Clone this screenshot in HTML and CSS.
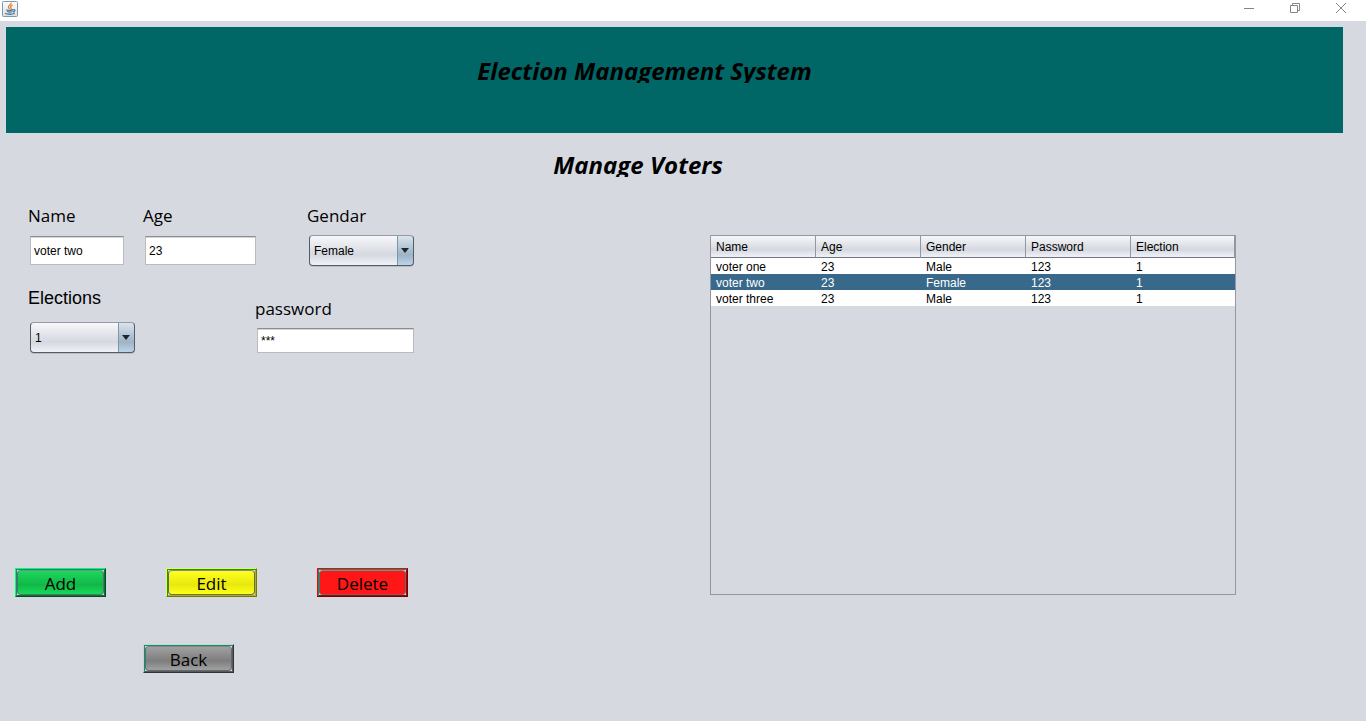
FILE: index.html
```html
<!DOCTYPE html>
<html lang="en">
<head>
<meta charset="utf-8">
<title>Election Management System</title>
<link rel="stylesheet" href="styles.css">
</head>
<body>
<div class="titlebar">
  <svg class="java-icon" viewBox="0 0 16 16" aria-hidden="true">
    <defs><linearGradient id="tile" x1="0" y1="0" x2="0" y2="1"><stop offset="0" stop-color="#fdfdfd"/><stop offset="1" stop-color="#dcdfe2"/></linearGradient></defs>
    <rect x=".5" y=".5" width="15" height="15" rx="1" fill="url(#tile)" stroke="#7f98ab"/>
    <path d="M9.200 1.800c.6 1.800-3.400 2.600-2.700 4.400.2.700.9 1.100 1 1.800M10.600 4.200c-2.200.8-2.500 1.700-1.600 2.700.4.500.1 1-.5 1.300" fill="none" stroke="#e8822c" stroke-width="1.300"/>
    <path d="M4.200 8.700c1.500.8 5 .8 6.800 0M5 10.500c1.400.7 4 .7 5.500 0M3 12.200c2.200 1.500 7.500 1.300 9.800 0M11.200 8.700c2.400-.6 2.200 1.700-.2 2.300" fill="none" stroke="#4d7a9c" stroke-width="1.300"/>
  </svg>
  <div class="window-controls">
    <button type="button" class="window-button" aria-label="Minimize"><svg viewBox="0 0 12 12"><path d="M1 6.500h10"/></svg></button>
    <button type="button" class="window-button" aria-label="Restore"><svg viewBox="0 0 12 12"><path d="M1.500 3.500h7v7h-7zM3.500 3.500v-2h7v7h-2"/></svg></button>
    <button type="button" class="window-button" aria-label="Close"><svg viewBox="0 0 12 12"><path d="M1 1l10 10M11 1L1 11"/></svg></button>
  </div>
</div>
<header class="banner"><h1 class="heading">Election Management System</h1></header>
<main>
  <h2 class="heading subheading">Manage Voters</h2>
  <div class="content">
    <form class="voter-form">
      <div class="row row-first">
        <div class="field"><label for="name">Name</label><div class="control"><input class="text name" id="name" type="text" value="voter two"></div></div>
        <div class="field"><label for="age">Age</label><div class="control"><input class="text age" id="age" type="text" value="23"></div></div>
        <div class="field"><label for="gender">Gendar</label><div class="control combo"><select id="gender"><option>Male</option><option selected>Female</option></select></div></div>
      </div>
      <div class="row row-second">
        <div class="field field-elections"><label class="plain" for="election">Elections</label><div class="control combo"><select id="election"><option>1</option></select></div></div>
        <div class="field"><label for="password">password</label><input class="text password" id="password" type="text" value="***" autocomplete="off"></div>
      </div>
      <div class="actions">
        <button type="button" class="action add"><span>Add</span></button>
        <button type="button" class="action edit"><span>Edit</span></button>
        <button type="button" class="action delete"><span>Delete</span></button>
      </div>
      <button type="button" class="action back"><span>Back</span></button>
    </form>
    <div class="table-pane">
      <table class="voters">
        <thead><tr><th>Name</th><th>Age</th><th>Gender</th><th>Password</th><th>Election</th></tr></thead>
        <tbody>
          <tr><td>voter one</td><td>23</td><td>Male</td><td>123</td><td>1</td></tr>
          <tr class="selected"><td>voter two</td><td>23</td><td>Female</td><td>123</td><td>1</td></tr>
          <tr><td>voter three</td><td>23</td><td>Male</td><td>123</td><td>1</td></tr>
        </tbody>
      </table>
    </div>
  </div>
</main>
</body>
</html>
```
FILE: styles.css
```css
* { box-sizing: border-box; }
body {
  margin: 0;
  min-height: 100vh;
  background: #d6d9e0;
  color: #000;
  font: 12px "Liberation Sans", Arial, sans-serif;
}
.titlebar {
  display: flex;
  justify-content: space-between;
  height: 21px;
  padding-left: 2px;
  background: #fff;
}
.java-icon { width: 16px; height: 16px; margin-top: 1px; }
.window-controls { display: flex; margin-right: 2px; }
.window-button {
  width: 46px;
  height: 16px;
  padding: 0;
  border: 0;
  background: none;
}
.window-button svg {
  display: block;
  width: 12px;
  height: 12px;
  margin: 0 auto;
  fill: none;
  stroke: #858585;
}
.banner {
  height: 106px;
  margin: 6px 23px 0 6px;
  padding: 30px 60px 0 0;
  background: #006666;
}
.heading {
  height: 26px;
  margin: 0;
  overflow: hidden;
  font: italic bold 24px/28px "Open Sans", "Noto Sans", sans-serif;
  text-align: center;
}
.subheading { margin-top: 18px; padding-right: 90px; }
.content {
  display: grid;
  grid-template-columns: 1fr 526px;
  padding: 27px 130px 48px 15px;
}
.row { display: flex; margin-left: 13px; }
.row-first { display: grid; grid-template-columns: 115px 164px auto; }
.row-second { align-items: flex-end; margin-top: 20px; }
.field { display: flex; flex-direction: column; gap: 7px; }
.field-elections { width: 227px; gap: 12px; }
label { font: 17px/24px "Open Sans", "Noto Sans", sans-serif; }
label.plain { font: 18px/24px "Liberation Sans", Arial, sans-serif; }
.control { display: flex; align-items: center; height: 31px; margin-left: 2px; }
.text {
  height: 29px;
  padding: 0 3px;
  border: 1px solid #b9bbc0;
  border-top: 1px solid #8a8c90;
  border-radius: 0;
  background: #fff;
  box-shadow: inset 0 1px 0 #d5d6d8;
  color: #000;
  font: inherit;
}
.name { width: 94px; }
.age { width: 111px; }
.password { width: 157px; height: 25px; margin-left: 2px; }
.combo { position: relative; width: 105px; }
.combo::after {
  content: "";
  position: absolute;
  right: 5px;
  top: 13px;
  border: 4px solid transparent;
  border-top: 5px solid #202428;
  border-bottom: 0;
  pointer-events: none;
}
select {
  appearance: none;
  width: 100%;
  height: 31px;
  padding: 0 20px 0 4px;
  border: 1px solid #525c69;
  border-top-color: #959ba5;
  border-radius: 4px;
  background:
    linear-gradient(#7d95a8, #7d95a8) right 15px top / 1px 100% no-repeat,
    linear-gradient(#dae4ec, #a9bfd0 50%, #9db4c7 65%, #bcd3e8) right / 16px 100% no-repeat,
    linear-gradient(#f7f8fa, #dcdfe5 50%, #d5d8df 65%, #eff2f8);
  box-shadow: 0 1px 0 #b9bdc6;
  color: #000;
  font: inherit;
}
.actions { display: flex; gap: 60px; margin-top: 215px; }
.action {
  width: 91px;
  height: 29px;
  padding: 1px 1px 1px 1px;
  border: 1px solid;
  background: #d6d9e0;
  color: #000;
  font: 17px/25px "Open Sans", "Noto Sans", sans-serif;
}
.action span {
  display: block;
  height: 25px;
  border: 1px solid #5f6b70;
  border-top-color: #7d8a88;
  border-radius: 4px;
}
.add { border-color: #00ff70 #00501f #00501f #00ff70; box-shadow: inset 1px 1px 0 #10906a, inset -1px -1px 0 #007a35; }
.add span { background: linear-gradient(#1cd85c, #11b848 60%, #16da58); }
.edit { border-color: #ffff00 #777700 #777700 #ffff00; box-shadow: inset 1px 1px 0 #10906a, inset -1px -1px 0 #b2b200; }
.edit span { background: linear-gradient(#ffff20, #e8e80e 60%, #ffff18); }
.delete { border-color: #ff0000 #770000 #770000 #ff0000; box-shadow: inset 1px 1px 0 #10906a, inset -1px -1px 0 #b20000; }
.delete span { background: #ff1717; }
.back { display: block; margin: 47px 0 0 128px; border-color: #d0d0d0 #333 #333 #d0d0d0; box-shadow: inset 1px 1px 0 #10906a, inset -1px -1px 0 #5a5a5a; }
.back span { background: linear-gradient(#a0a0a0, #7e7e7e 60%, #a0a0a0); }
.table-pane { height: 360px; margin-top: 31px; border: 1px solid #9297a1; }
.voters { width: 100%; border-collapse: separate; border-spacing: 0; table-layout: fixed; }
th, td { padding: 0 5px; font-weight: normal; text-align: left; }
th {
  height: 22px;
  border-right: 1px solid #9297a1;
  border-bottom: 1px solid #70757f;
  background: linear-gradient(#f7f8fa, #dcdfe5 50%, #d5d8df 65%, #eff2f8);
}
th:not(:last-child) { width: 105px; }
td { height: 16px; padding-top: 2px; background: #fff; line-height: 14px; }
.selected td { background: #39698a; color: #fff; }
```
